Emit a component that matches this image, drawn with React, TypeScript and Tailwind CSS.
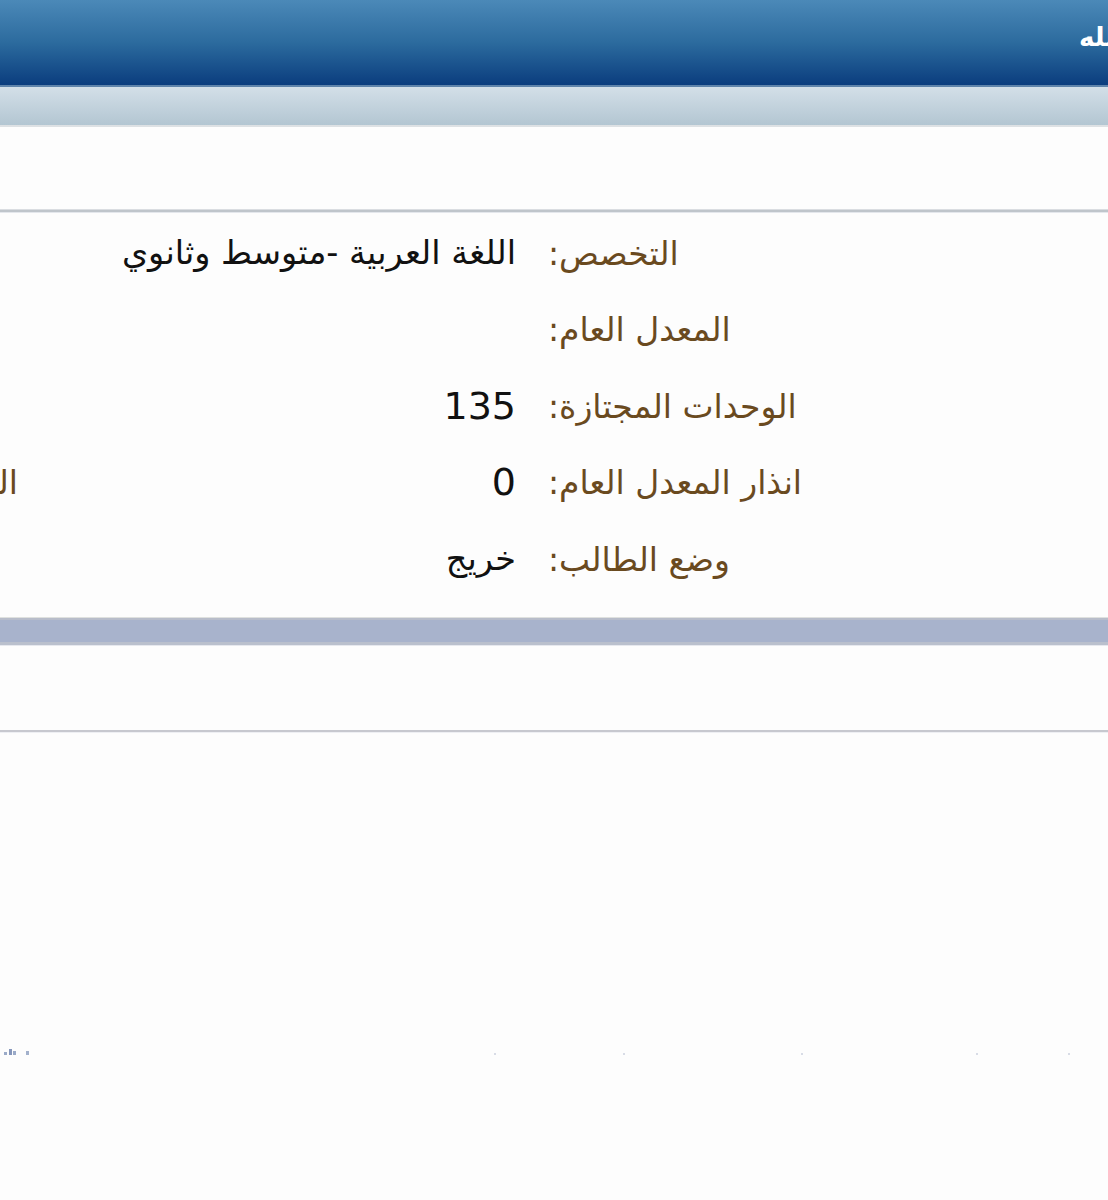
import React from "react";

const rows = [
  { label: "التخصص:", value: "اللغة العربية -متوسط وثانوي", num: false },
  { label: "المعدل العام:", value: "", num: false },
  { label: "الوحدات المجتازة:", value: "135", num: true },
  { label: "انذار المعدل العام:", value: "0", num: true, extra: "الوحدات" },
  { label: "وضع الطالب:", value: "خريج", num: false },
];

export default function App() {
  return (
    <div
      dir="rtl"
      className="w-[1108px] h-[1200px] overflow-hidden bg-[#fdfdfd]"
      style={{ fontFamily: '"DejaVu Sans", sans-serif' }}
    >
      {/* header */}
      <div className="h-[85px] bg-gradient-to-b from-[#4b89b8] via-[#2c6b9e] to-[#0b3d7e] flex items-start overflow-hidden">
        <div className="mr-[-16px] mt-[24px] text-white font-bold text-[26px] leading-none whitespace-nowrap">
          الله
        </div>
      </div>
      <div className="h-[2px] bg-[#5f84ab]" />
      <div className="h-[38px] bg-gradient-to-b from-[#d3dfe8] to-[#b3c6d2]" />
      <div className="h-[2px] bg-[#dde1e4]" />

      <div className="h-[82px]" />
      <div className="h-[1px] bg-[#dadde1]" />
      <div className="h-[2px] bg-[#bfc5cb]" />
      <div className="h-[1px] bg-[#e4e7ec]" />

      {/* rows */}
      <div className="pt-[2px] overflow-hidden">
        {rows.map((r, i) => (
          <div key={i} className="flex h-[76.5px] items-center whitespace-nowrap">
            <div className="w-[288px] shrink-0" />
            <div className="w-[272px] shrink-0 text-left text-[33px] text-[#6a4a1f]">
              {r.label}
            </div>
            <div className="w-[32px] shrink-0" />
            <div
              className={
                r.num
                  ? "w-[498px] shrink-0 text-right text-[38px] text-[#111]"
                  : "w-[498px] shrink-0 text-right text-[33.5px] text-[#111]"
              }
            >
              {r.value}
            </div>
            {r.extra ? (
              <div className="shrink-0 text-right text-[33px] text-[#6a4a1f]">{r.extra}</div>
            ) : null}
          </div>
        ))}
      </div>

      <div className="mt-[19px] h-[1px] bg-[#dfe1df]" />
      <div className="h-[2px] bg-[#b8bdca]" />
      <div className="h-[22px] bg-[#a8b3cc]" />
      <div className="h-[3px] bg-[#bac0cd]" />
      <div className="h-[1px] bg-[#e6e8ee]" />

      <div className="h-[84px]" />
      <div className="h-[2px] bg-[#c7c8cf]" />
      <div className="h-[1px] bg-[#eeeff3]" />

      {/* faint footer specks */}
      <div dir="ltr" className="mt-[314px] flex items-end h-[8px]">
        <div className="ml-[4px] w-[3px] h-[3px] bg-[#9aaac8]" />
        <div className="ml-[2px] w-[3px] h-[6px] bg-[#8596bb]" />
        <div className="ml-[1px] w-[3px] h-[4px] bg-[#9aaac8]" />
        <div className="ml-[10px] w-[3px] h-[4px] bg-[#a3b1cc]" />
        <div className="ml-[465px] w-[2px] h-[2px] bg-[#d8dce6]" />
        <div className="ml-[127px] w-[2px] h-[2px] bg-[#d8dce6]" />
        <div className="ml-[176px] w-[2px] h-[2px] bg-[#d8dce6]" />
        <div className="ml-[173px] w-[2px] h-[2px] bg-[#d8dce6]" />
        <div className="ml-[90px] w-[2px] h-[2px] bg-[#d8dce6]" />
      </div>
    </div>
  );
}
